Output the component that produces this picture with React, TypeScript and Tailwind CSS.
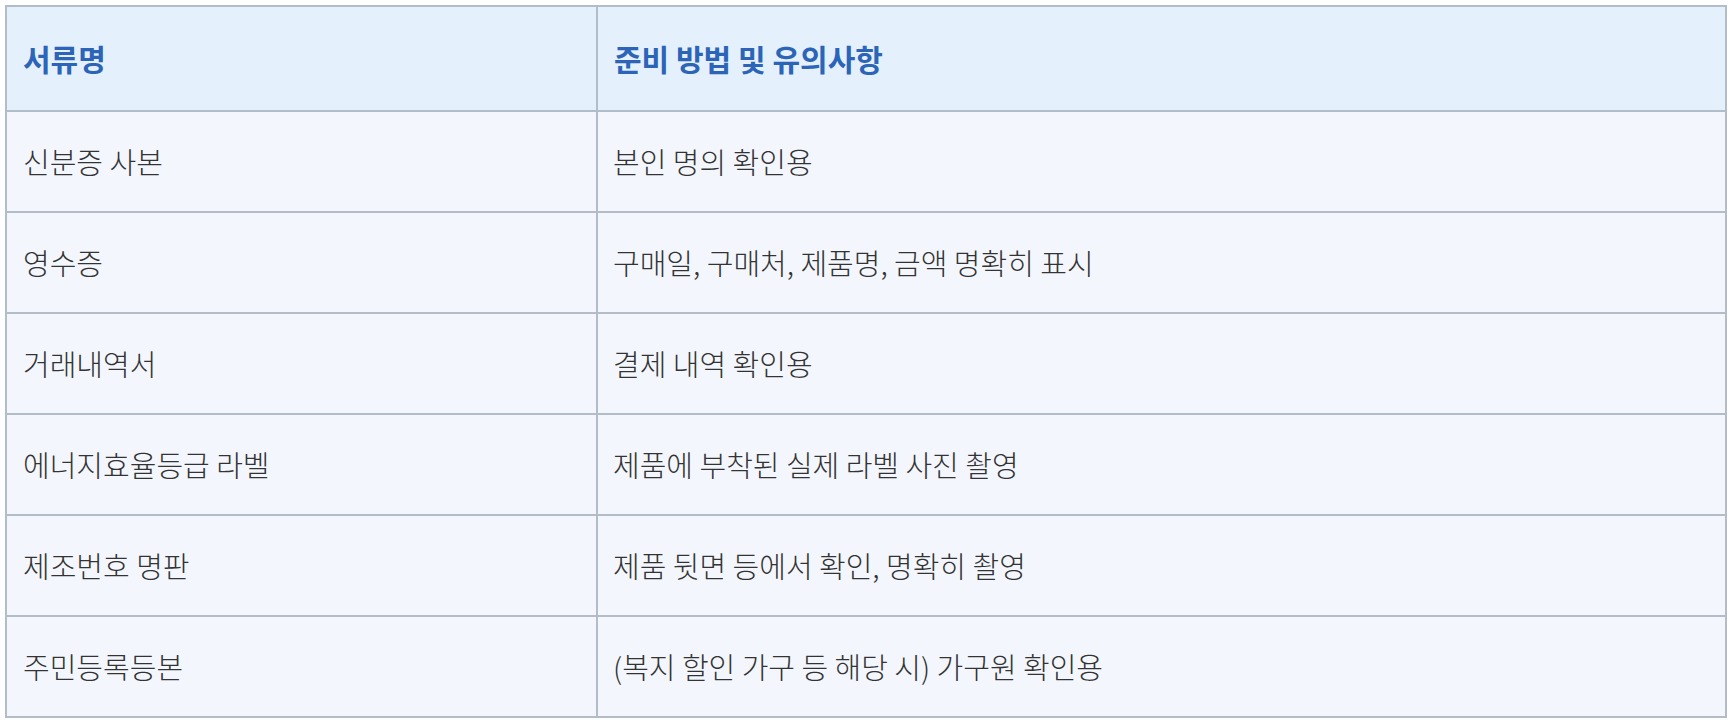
const ROWS: Array<[string, string]> = [
  ['신분증 사본', '본인 명의 확인용'],
  ['영수증', '구매일, 구매처, 제품명, 금액 명확히 표시'],
  ['거래내역서', '결제 내역 확인용'],
  ['에너지효율등급 라벨', '제품에 부착된 실제 라벨 사진 촬영'],
  ['제조번호 명판', '제품 뒷면 등에서 확인, 명확히 촬영'],
  ['주민등록등본', '(복지 할인 가구 등 해당 시) 가구원 확인용'],
];

export default function App() {
  return (
    <div
      className="min-h-screen bg-white p-[5px]"
      style={{ fontFamily: '"Noto Sans CJK KR", "Noto Sans", sans-serif' }}
    >
      <table className="w-[1722px] table-fixed border-collapse border-2 border-[#b3bdc7]">
        <colgroup>
          <col className="w-[591px]" />
          <col />
        </colgroup>
        <thead>
          <tr className="h-[105px] bg-[#e4f1fc]">
            <th className="border-2 border-[#b3bdc7] px-[16px] text-left text-[30px] font-bold text-[#2c64b8]">
              서류명
            </th>
            <th className="border-2 border-[#b3bdc7] px-[16px] text-left text-[30px] font-bold text-[#2c64b8]">
              준비 방법 및 유의사항
            </th>
          </tr>
        </thead>
        <tbody>
          {ROWS.map(([name, note]) => (
            <tr key={name} className="h-[101px] bg-[#f3f7fd]">
              <td className="border-2 border-[#b3bdc7] px-[16px] text-[29px] font-light text-[#333333]">{name}</td>
              <td className="border-2 border-[#b3bdc7] px-[15px] text-[29px] font-light text-[#333333]">{note}</td>
            </tr>
          ))}
        </tbody>
      </table>
    </div>
  );
}
